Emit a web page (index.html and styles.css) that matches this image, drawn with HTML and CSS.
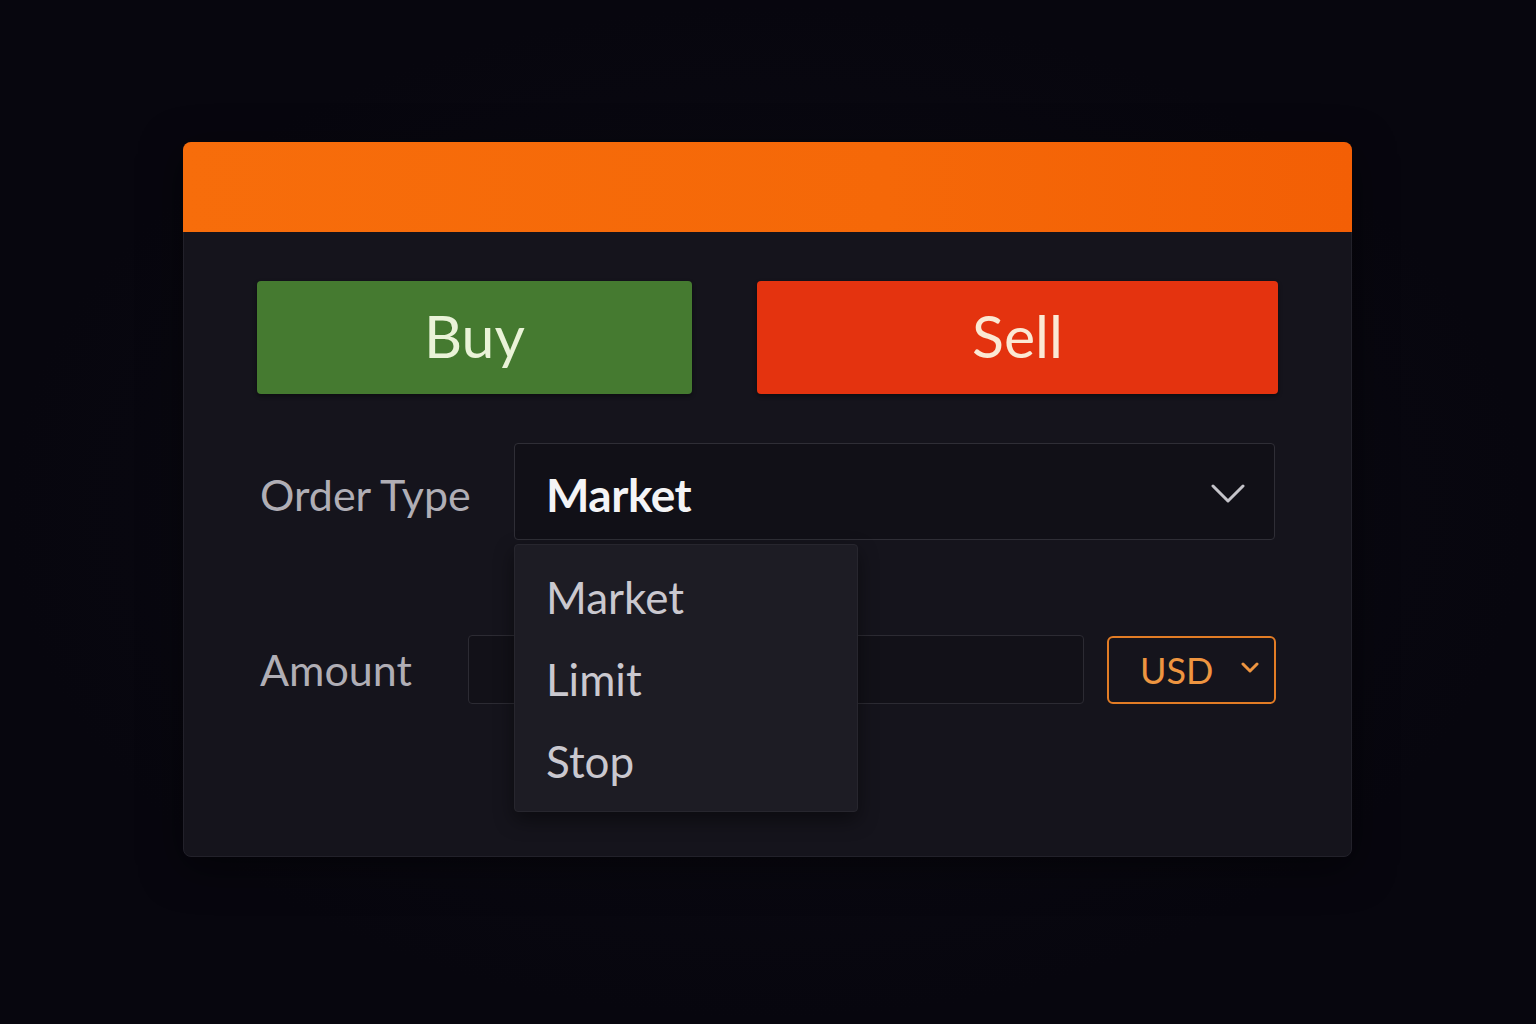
FILE: index.html
```html
<!DOCTYPE html>
<html lang="en">
<head>
<meta charset="utf-8">
<title>Order Ticket</title>
<link rel="stylesheet" href="styles.css">
</head>
<body>
<div class="stage">
  <section class="panel">
    <header class="panel-head"></header>
    <div class="panel-body">
      <div class="actions">
        <button class="btn btn-buy">Buy</button>
        <button class="btn btn-sell">Sell</button>
      </div>
      <div class="row row-order">
        <label class="field-label">Order Type</label>
        <div class="select">
          <span class="select-value">Market</span>
          <svg class="chev" viewBox="0 0 34 20" width="34" height="20"><path d="M2 2 L17 17 L32 2" fill="none" stroke="currentColor" stroke-width="3" stroke-linecap="round" stroke-linejoin="round"/></svg>
          <ul class="menu">
            <li>Market</li>
            <li>Limit</li>
            <li>Stop</li>
          </ul>
        </div>
      </div>
      <div class="row row-amount">
        <label class="field-label">Amount</label>
        <div class="amount-input"></div>
        <div class="currency">
          <span>USD</span>
          <svg class="chev-sm" viewBox="0 0 20 12" width="20" height="12"><path d="M3 2 L10 9 L17 2" fill="none" stroke="currentColor" stroke-width="3" stroke-linecap="round" stroke-linejoin="round"/></svg>
        </div>
      </div>
    </div>
  </section>
</div>
</body>
</html>
```
FILE: styles.css
```css
* { box-sizing: border-box; }
html, body {
  margin: 0;
  padding: 0;
  background: #07060e;
  font-family: Lato, "Open Sans", "Noto Sans", sans-serif;
}
.stage {
  height: 1024px;
  padding: 142px 0 0 183px;
  display: flex;
  align-items: flex-start;
  background: radial-gradient(ellipse at center, #0d0c15 0%, #07060e 70%);
}
.panel {
  width: 1169px;
  height: 715px;
  background: #15141c;
  border: 1px solid #22212a;
  border-radius: 8px;
  box-shadow: 0 10px 40px rgba(0,0,0,0.5);
}
.panel-head {
  height: 90px;
  margin: -1px -1px 0;
  background: linear-gradient(90deg, #f76d0b 0%, #f56808 60%, #f35f05 100%);
  border-radius: 8px 8px 0 0;
}
.panel-body {
  padding: 49px 73px 0 73px;
}
.actions {
  display: grid;
  grid-template-columns: 435px 1fr;
  column-gap: 65px;
}
.btn {
  height: 113px;
  border: none;
  border-radius: 4px;
  font-family: inherit;
  font-size: 59px;
  font-weight: 400;
  padding: 0 0 4px;
  box-shadow: 0 2px 4px rgba(0,0,0,0.4);
}
.btn-buy {
  background: #457a30;
  color: #eaf3d8;
}
.btn-sell {
  background: #e4330f;
  color: #fbe9d4;
}
.row {
  display: flex;
  align-items: center;
}
.row-order {
  margin-top: 49px;
}
.field-label {
  padding-left: 3px;
  color: #b0aeb5;
  font-size: 43px;
}
.row-order .field-label { width: 257px; flex: none; padding-top: 6px; }
.select {
  position: relative;
  flex: none;
  width: 761px;
  height: 97px;
  background: #111017;
  border: 1px solid #2f2e36;
  border-radius: 4px;
  display: flex;
  align-items: center;
  justify-content: space-between;
  padding: 6px 29px 0 31px;
}
.select-value {
  color: #f4f4f6;
  font-size: 46px;
  font-weight: 700;
  letter-spacing: -0.5px;
}
.chev { color: #c5c4ca; margin-top: -2px; }
.menu {
  position: absolute;
  top: calc(100% + 5px);
  left: -1px;
  width: 344px;
  height: 268px;
  margin: 0;
  padding: 11px 0 0 31px;
  list-style: none;
  background: #1d1c24;
  border: 1px solid #27262e;
  border-radius: 4px;
  box-shadow: 0 8px 20px rgba(0,0,0,0.45);
  z-index: 2;
}
.menu li {
  color: #cac8cf;
  font-size: 44px;
  height: 82px;
  line-height: 82px;
}
.row-amount {
  margin-top: 95px;
}
.row-amount .field-label { width: 211px; flex: none; }
.amount-input {
  width: 616px;
  height: 69px;
  flex: none;
  background: #121118;
  border: 1px solid #2c2b33;
  border-radius: 4px;
}
.currency {
  margin-left: 23px;
  width: 169px;
  height: 68px;
  flex: none;
  border: 2px solid #e27c25;
  border-radius: 6px;
  color: #ee9540;
  display: flex;
  align-items: center;
  padding-left: 31px;
  font-size: 36px;
}
.currency span { width: 100px; }
.chev-sm { color: #ee9540; margin-top: -4px; }
```
